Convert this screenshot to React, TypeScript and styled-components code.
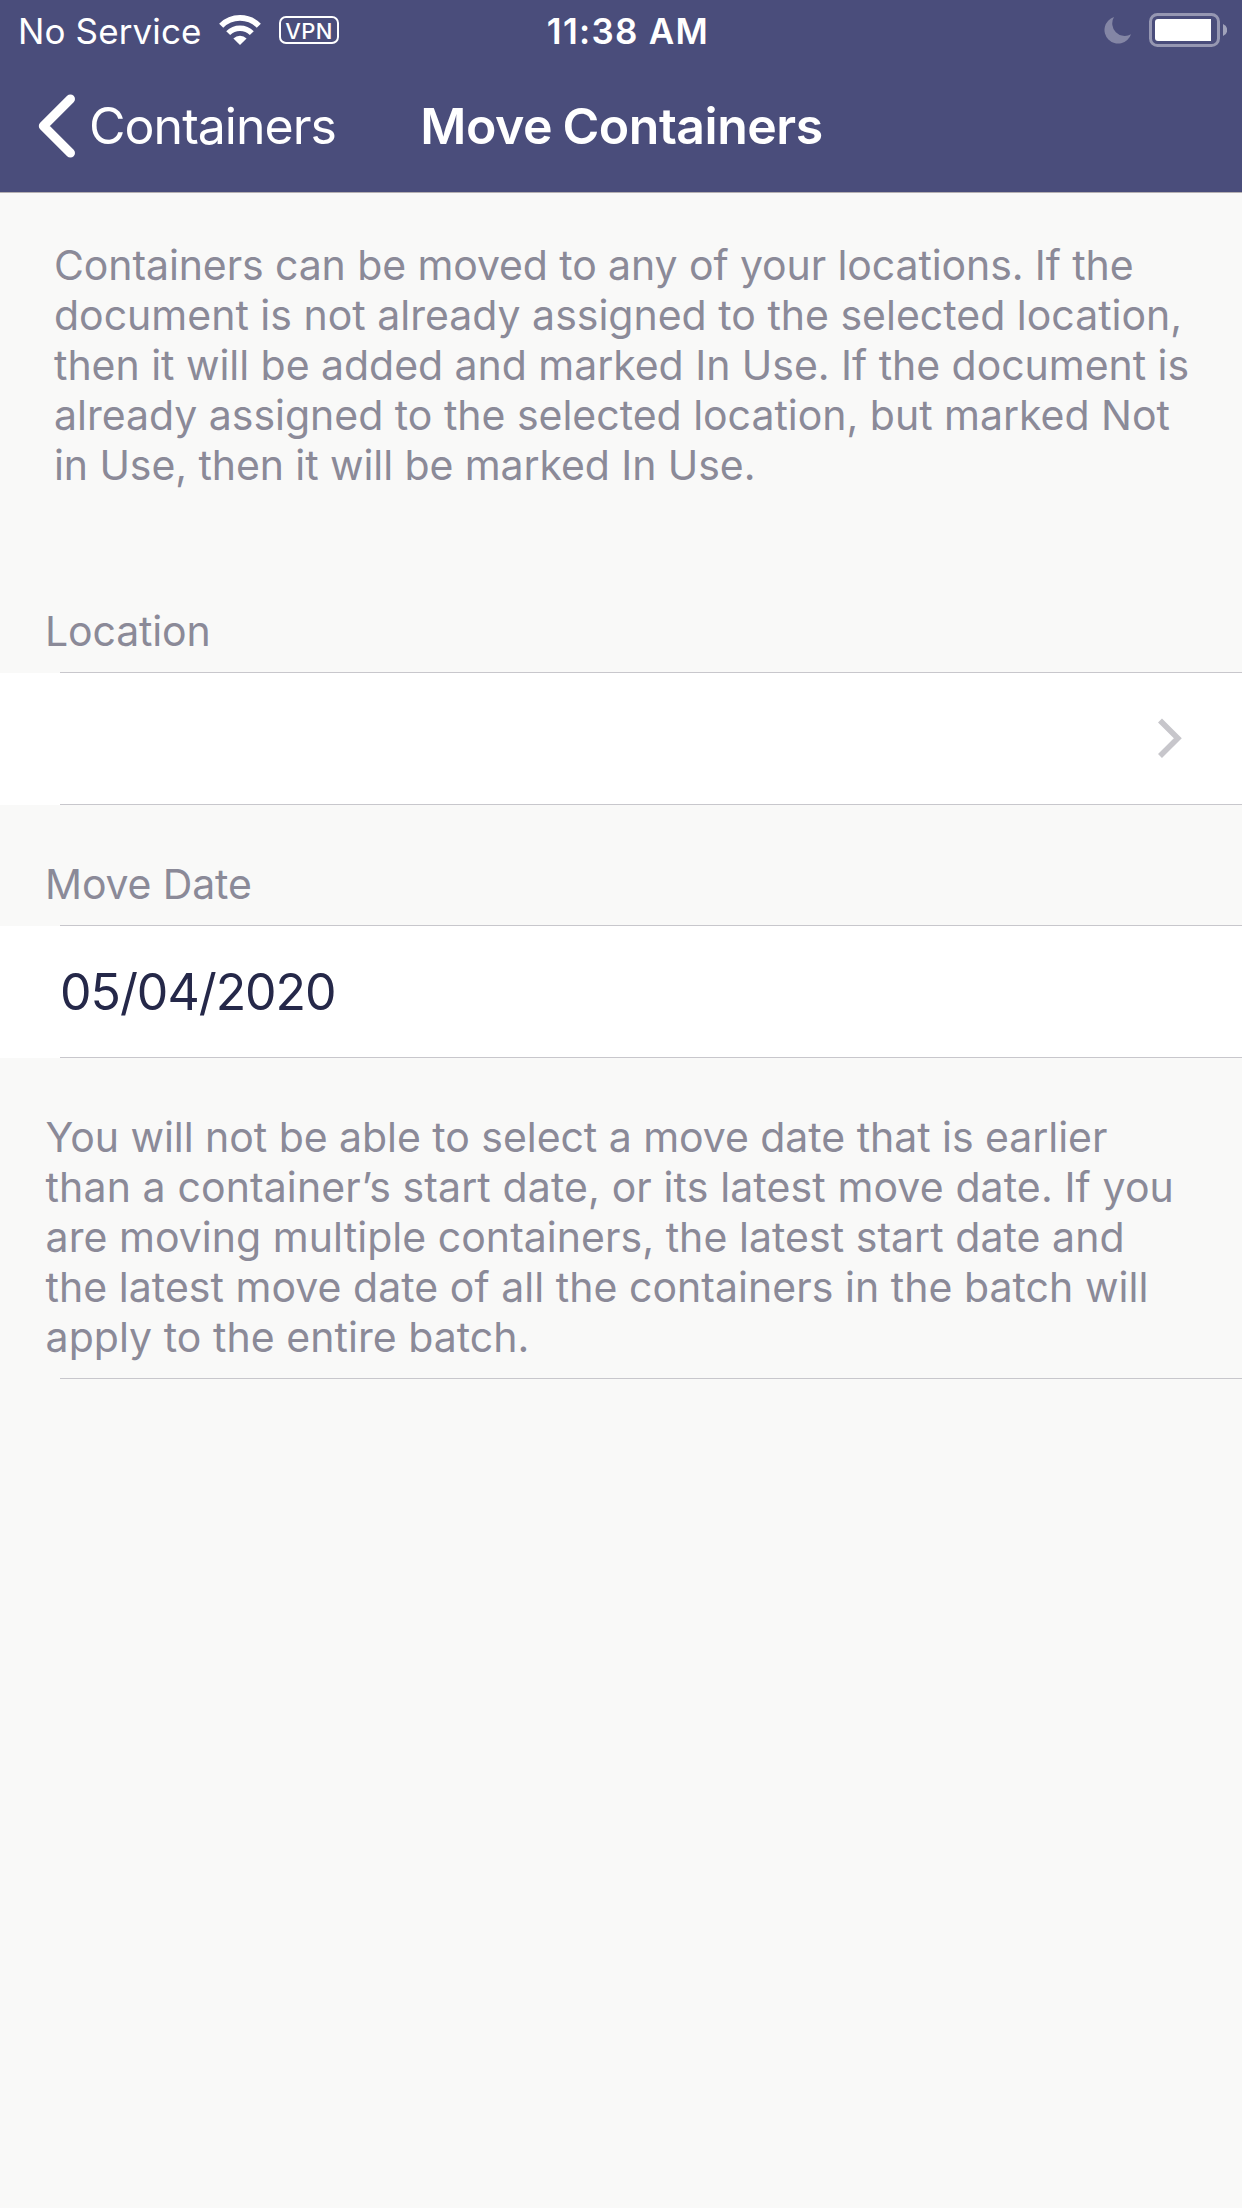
import React from "react";
import styled, { createGlobalStyle } from "styled-components";

const color = {
  header: "#4a4d7b",
  page: "#f9f9f8",
  cell: "#ffffff",
  line: "#c8c7cc",
  muted: "#8b8a98",
  ink: "#252849",
  chevron: "#c7c6cb",
};

const GlobalStyle = createGlobalStyle`
  *, *::before, *::after { box-sizing: border-box; }
  body {
    margin: 0;
    background: ${color.page};
    font-family: Inter, "Liberation Sans", sans-serif;
  }
  svg { display: block; }
`;

const Screen = styled.div`
  display: flex;
  flex-direction: column;
  width: 1242px;
  min-height: 2208px;
  background: ${color.page};
`;

const Header = styled.header`
  display: flex;
  flex-direction: column;
  height: 193px;
  background: ${color.header};
  border-bottom: 1px solid #b5b0b2;
  color: #ffffff;
`;

const StatusBar = styled.div`
  display: grid;
  grid-template-columns: 1fr auto 1fr;
  align-items: center;
  height: 60px;
  padding: 0 4px 0 18px;
`;

const StatusLeft = styled.div`
  display: flex;
  align-items: center;
`;

const StatusRight = styled.div`
  display: flex;
  align-items: center;
  justify-content: flex-end;
  gap: 18px;
  padding-right: 11px;
`;

const Carrier = styled.span`
  width: 201px;
  padding-top: 2px;
  font-size: 35px;
  line-height: 42px;
  letter-spacing: 0.12px;
  white-space: nowrap;
`;

const Time = styled.span`
  padding-top: 2px;
  font-size: 35px;
  font-weight: 560;
  line-height: 42px;
  letter-spacing: 1.3px;
  white-space: nowrap;
`;

const VpnBadge = styled.span`
  display: flex;
  align-items: center;
  justify-content: center;
  width: 60px;
  height: 28px;
  margin-left: 18px;
  padding-top: 1px;
  border: 2px solid #ffffff;
  border-radius: 7px;
  font-size: 22px;
  font-weight: 500;
  line-height: 24px;
  letter-spacing: 0.4px;
`;

const NavBar = styled.nav`
  display: grid;
  grid-template-columns: 1fr auto 1fr;
  align-items: center;
  height: 132px;
  padding-left: 37px;
  padding-right: 36px;
`;

const BackButton = styled.button`
  display: flex;
  align-items: center;
  gap: 13px;
  padding: 0;
  border: 0;
  background: none;
  color: inherit;
  font: inherit;
  font-size: 50px;
  line-height: 60px;
  letter-spacing: -0.97px;
`;

const Title = styled.h1`
  margin: 0;
  font-size: 50px;
  font-weight: 600;
  line-height: 60px;
  letter-spacing: -0.48px;
  word-spacing: -1.6px;
`;

const Paragraph = styled.p<{ $inset: number }>`
  display: flex;
  flex-direction: column;
  margin: 0;
  padding-left: ${(p) => p.$inset}px;
  color: ${color.muted};
  font-size: 41px;
  line-height: 50px;
  white-space: nowrap;
`;

const Line = styled.span<{ $track: number }>`
  letter-spacing: ${(p) => p.$track}px;
`;

const Intro = styled.section`
  padding-top: 47px;
`;

const Section = styled.section<{ $gap: number }>`
  display: flex;
  flex-direction: column;
  padding-top: ${(p) => p.$gap}px;
`;

const SectionLabel = styled.h2`
  margin: 0 0 16px;
  padding-left: 45px;
  color: ${color.muted};
  font-size: 41px;
  font-weight: 400;
  line-height: 50px;
  letter-spacing: -0.15px;
`;

const Divider = styled.hr`
  width: 1182px;
  height: 1px;
  margin: 0 0 0 60px;
  border: 0;
  background: ${color.line};
`;

const Cell = styled.div`
  display: flex;
  flex-direction: column;
  height: 132px;
  background: ${color.cell};
`;

const CellContent = styled.div`
  display: flex;
  flex: 1;
  align-items: center;
  justify-content: space-between;
  padding: 0 60px 0 60px;
`;

const CellValue = styled.span`
  padding-top: 1px;
  color: ${color.ink};
  font-size: 50px;
  line-height: 60px;
  letter-spacing: -1.03px;
`;

const Footnote = styled.footer`
  display: flex;
  flex-direction: column;
  gap: 16px;
  padding-top: 54px;
`;

const introLines: [string, number][] = [
  ["Containers can be moved to any of your locations. If the", -0.1],
  ["document is not already assigned to the selected location,", 0],
  ["then it will be added and marked In Use. If the document is", -0.037],
  ["already assigned to the selected location, but marked Not", -0.015],
  ["in Use, then it will be marked In Use.", -0.08],
];

const footnoteLines: [string, number][] = [
  ["You will not be able to select a move date that is earlier", -0.047],
  ["than a container’s start date, or its latest move date. If you", 0.118],
  ["are moving multiple containers, the latest start date and", 0.045],
  ["the latest move date of all the containers in the batch will", 0.035],
  ["apply to the entire batch.", 0.04],
];

function TextBlock({ lines, inset }: { lines: [string, number][]; inset: number }) {
  return (
    <Paragraph $inset={inset}>
      {lines.map(([text, track]) => (
        <Line key={text} $track={track}>
          {text}
        </Line>
      ))}
    </Paragraph>
  );
}

function WifiIcon() {
  return (
    <svg width="42" height="30" viewBox="0 0 42 30" fill="none" stroke="#fff">
      <path d="M2.2 10.7 A26.6 26.6 0 0 1 39.8 10.7" strokeWidth="5.8" />
      <path d="M9.2 18.1 A16.6 16.6 0 0 1 32.8 18.1" strokeWidth="5.6" />
      <path d="M21 30 L14.4 23.4 A9.4 9.4 0 0 1 27.6 23.4 Z" fill="#fff" stroke="none" />
    </svg>
  );
}

function MoonIcon() {
  return (
    <svg width="27" height="27" viewBox="0 0 27 27" fill="#fff" fillOpacity="0.32">
      <path d="M10 0 A13.6 13.6 0 1 0 27 17.2 A12.5 12.5 0 0 1 10 0 Z" />
    </svg>
  );
}

function BatteryIcon() {
  return (
    <svg width="78" height="34" viewBox="0 0 78 34">
      <rect x="1.5" y="1.5" width="68" height="31" rx="7" fill="none" stroke="#fff" strokeOpacity="0.42" strokeWidth="3" />
      <path d="M9 6 H62 V28 H9 A3 3 0 0 1 6 25 V9 A3 3 0 0 1 9 6 Z" fill="#fff" />
      <path d="M74 11 A6.4 6.4 0 0 1 74 23 Z" fill="#fff" fillOpacity="0.48" />
    </svg>
  );
}

function BackIcon() {
  return (
    <svg width="39" height="64" viewBox="0 0 39 64" fill="none" stroke="#fff" strokeWidth="9.2" strokeLinecap="round">
      <path d="M33.4 5.1 L6.4 32 L33.4 58.9" strokeLinejoin="round" />
    </svg>
  );
}

function DisclosureIcon() {
  return (
    <svg width="24" height="42" viewBox="0 0 24 42" fill="none" stroke={color.chevron} strokeWidth="5.6">
      <path d="M2 2.6 L19.8 20.3 L2 38" />
    </svg>
  );
}

export default function App() {
  return (
    <>
      <GlobalStyle />
      <Screen>
        <Header>
          <StatusBar>
            <StatusLeft>
              <Carrier>No Service</Carrier>
              <WifiIcon />
              <VpnBadge>VPN</VpnBadge>
            </StatusLeft>
            <Time>11:38 AM</Time>
            <StatusRight>
              <MoonIcon />
              <BatteryIcon />
            </StatusRight>
          </StatusBar>
          <NavBar>
            <BackButton>
              <BackIcon />
              Containers
            </BackButton>
            <Title>Move Containers</Title>
          </NavBar>
        </Header>

        <main>
          <Intro>
            <TextBlock lines={introLines} inset={54} />
          </Intro>

          <Section $gap={116}>
            <SectionLabel>Location</SectionLabel>
            <Divider />
            <Cell>
              <CellContent>
                <span />
                <DisclosureIcon />
              </CellContent>
              <Divider />
            </Cell>
          </Section>

          <Section $gap={54}>
            <SectionLabel>Move Date</SectionLabel>
            <Divider />
            <Cell>
              <CellContent>
                <CellValue>05/04/2020</CellValue>
              </CellContent>
              <Divider />
            </Cell>
          </Section>

          <Footnote>
            <TextBlock lines={footnoteLines} inset={45.6} />
            <Divider />
          </Footnote>
        </main>
      </Screen>
    </>
  );
}
